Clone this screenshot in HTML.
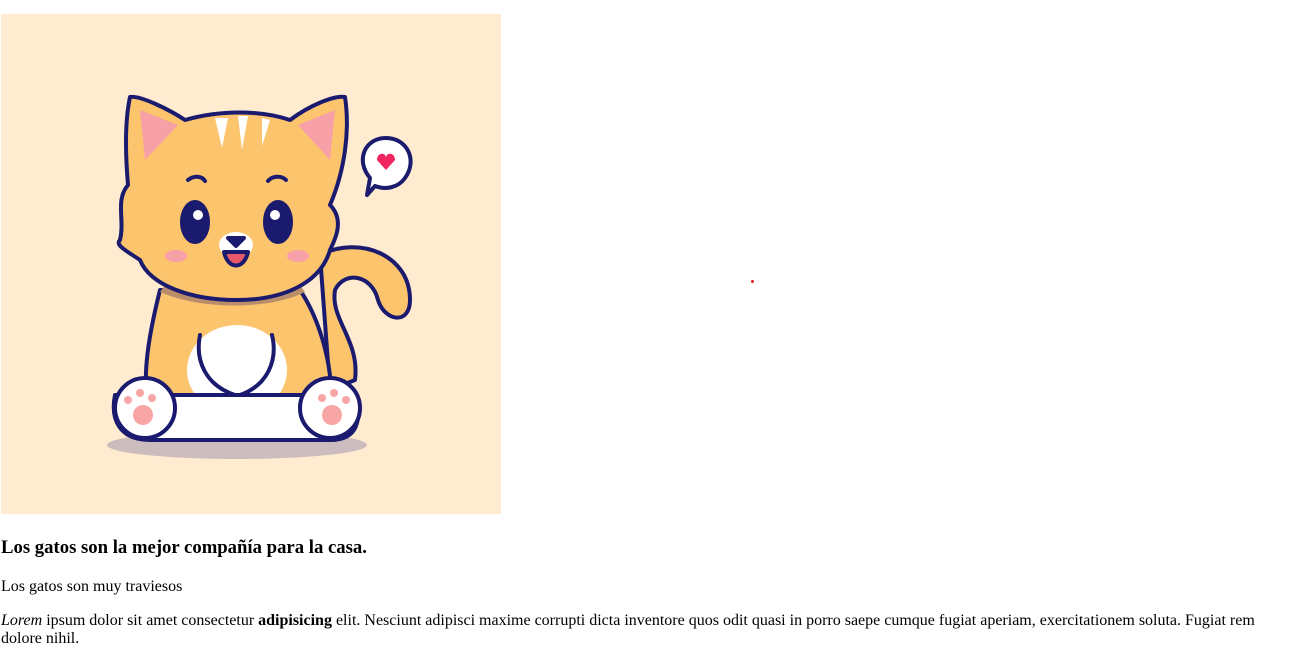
<!DOCTYPE html>
<html><head><meta charset="utf-8"><style>
html,body{margin:0;padding:0;background:#fff;overflow:hidden;width:1298px;height:635px;font-family:"Liberation Serif",serif;color:#000}
.img{position:absolute;left:1px;top:14px;width:500px;height:500px;background:#feebd0}
h3{position:absolute;left:1px;top:537px;margin:0;font-size:18.72px;font-weight:bold;line-height:22px}
.p1{position:absolute;left:1px;top:578px;margin:0;font-size:16px;line-height:18px}
.p2{position:absolute;left:1px;top:612px;margin:0;font-size:16px;line-height:18px;width:1280px}
.dot{position:absolute;left:751px;top:280px;width:3px;height:3px;border-radius:50%;background:#d22}
</style></head><body>
<div class="img">
<svg width="500" height="500" viewBox="1 14 500 500" xmlns="http://www.w3.org/2000/svg">
<g stroke="#1a1a6e" stroke-width="4" stroke-linejoin="round" stroke-linecap="round">
<ellipse cx="237" cy="445" rx="130" ry="14" fill="#cdbcbe" stroke="none"/>
<path d="M320 255 C360 235 410 255 410 300 C410 325 385 322 378 300 C372 275 345 270 335 290 C330 320 360 340 355 380 L330 390 Z" fill="#fbc46d"/>
<path d="M160 290 C150 330 140 380 150 410 L330 410 C335 370 320 320 300 290 Z" fill="#fbc46d"/>
<path d="M160 292 C200 310 270 310 305 292 L300 285 L165 285 Z" fill="#b98d6a" stroke="none"/>
<ellipse cx="237" cy="370" rx="50" ry="45" fill="#fff" stroke="none"/>
<path d="M115 395 C110 420 120 440 150 440 L330 440 C358 440 362 420 355 395 Z" fill="#fff"/>
<ellipse cx="145" cy="408" rx="30" ry="30" fill="#fff"/>
<ellipse cx="330" cy="408" rx="30" ry="30" fill="#fff"/>
<circle cx="143" cy="415" r="10" fill="#f8a5a5" stroke="none"/>
<circle cx="332" cy="415" r="10" fill="#f8a5a5" stroke="none"/>
<circle cx="128" cy="400" r="4" fill="#f8a5a5" stroke="none"/>
<circle cx="140" cy="393" r="4" fill="#f8a5a5" stroke="none"/>
<circle cx="152" cy="398" r="4" fill="#f8a5a5" stroke="none"/>
<circle cx="322" cy="398" r="4" fill="#f8a5a5" stroke="none"/>
<circle cx="334" cy="393" r="4" fill="#f8a5a5" stroke="none"/>
<circle cx="346" cy="400" r="4" fill="#f8a5a5" stroke="none"/>
<path d="M200 335 C195 360 205 385 235 395 M272 335 C278 360 268 385 240 395" fill="none"/>
<path d="M130 97 C140 95 170 110 185 120 C220 110 260 110 290 120 C310 105 335 95 345 97 C350 130 345 170 330 205 C345 220 335 240 330 250 C320 285 280 300 237 300 C190 300 150 285 140 260 C125 250 115 245 120 240 C125 220 115 200 128 185 C125 150 125 120 130 97 Z" fill="#fbc46d"/>
<path d="M140 110 L178 125 L145 160 Z M335 110 L298 125 L330 160 Z" fill="#f7a0a8" stroke="none"/>
<path d="M215 118 L222 148 L228 118 Z M238 116 L242 150 L248 116 Z M262 118 L262 146 L270 120 Z" fill="#fff" stroke="none"/>
<ellipse cx="195" cy="222" rx="13" ry="20" fill="#1a1a6e"/>
<ellipse cx="278" cy="222" rx="13" ry="20" fill="#1a1a6e"/>
<circle cx="198" cy="215" r="5" fill="#fff" stroke="none"/>
<circle cx="275" cy="215" r="5" fill="#fff" stroke="none"/>
<ellipse cx="236" cy="245" rx="17" ry="13" fill="#fff" stroke="none"/>
<path d="M228 238 L244 238 L236 246 Z" fill="#1a1a6e"/>
<path d="M224 252 C228 270 244 270 248 252 Z" fill="#e85a6a"/>
<ellipse cx="176" cy="256" rx="11" ry="6" fill="#f7a0a8" stroke="none"/>
<ellipse cx="298" cy="256" rx="11" ry="6" fill="#f7a0a8" stroke="none"/>
<path d="M188 180 C194 175 202 176 205 181 M268 181 C272 176 281 175 286 180" fill="none"/>
<path d="M370 178 C355 160 365 138 386 138 C407 138 418 160 405 178 C398 188 385 190 375 186 L367 195 Z" fill="#fff"/>
<path d="M386 170 L377 160 C377 152 386 152 386 158 C386 152 395 152 395 160 Z" fill="#f0245e" stroke="none"/>
</g>
</svg>
</div>
<div class="dot"></div>
<h3>Los gatos son la mejor compañía para la casa.</h3>
<p class="p1">Los gatos son muy traviesos</p>
<p class="p2"><i>Lorem</i> ipsum dolor sit amet consectetur <b>adipisicing</b> elit. Nesciunt adipisci maxime corrupti dicta inventore quos odit quasi in porro saepe cumque fugiat aperiam, exercitationem soluta. Fugiat rem dolore nihil.</p>
</body></html>
